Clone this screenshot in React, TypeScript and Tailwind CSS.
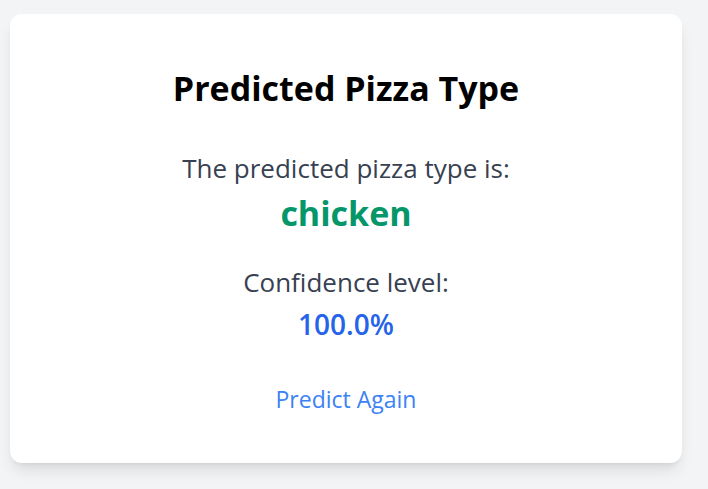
export default function App() {
  return (
    <div
      className="min-h-screen bg-[#f3f4f6] pt-[14px] pl-[10px]"
      style={{ fontFamily: '"Open Sans", "Noto Sans", sans-serif' }}
    >
      <div className="w-[672px] h-[449px] bg-white rounded-xl shadow-lg flex flex-col items-center pt-[54px]">
        <h1 className="text-[34px] leading-[40px] font-bold text-black">Predicted Pizza Type</h1>
        <p className="mt-[44px] text-[26px] leading-[32px] text-[#374151]">The predicted pizza type is:</p>
        <p className="mt-[7px] text-[34px] leading-[44px] font-bold text-[#059669]">chicken</p>
        <p className="mt-[31px] text-[26px] leading-[32px] text-[#374151]">Confidence level:</p>
        <p className="mt-[8px] text-[28px] leading-[36px] font-semibold text-[#2563eb]">100.0%</p>
        <a href="#" className="mt-[42px] text-[23px] leading-[30px] text-[#3b82f6]">
          Predict Again
        </a>
      </div>
    </div>
  );
}
